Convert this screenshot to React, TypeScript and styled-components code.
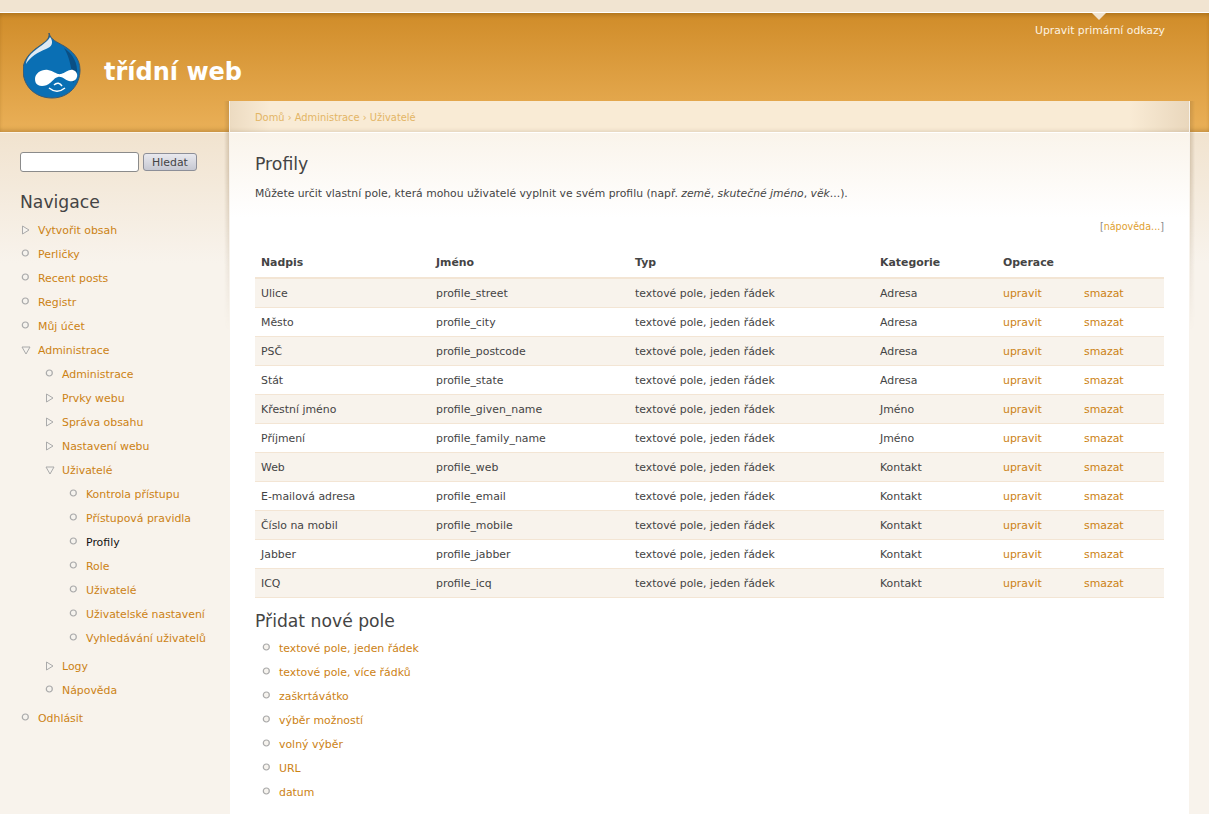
import React from "react";
import styled, { createGlobalStyle } from "styled-components";

const Global = createGlobalStyle`
  html, body { margin: 0; padding: 0; }
  body {
    font-family: "DejaVu Sans", sans-serif;
    font-size: 10.9px;
    color: #444;
    background: #f8f3ec;
    height: 814px;
    overflow: hidden;
  }
  a { color: #cc8214; text-decoration: none; }
`;

const Page = styled.div`
  width: 1209px;
  height: 814px;
  overflow: hidden;
`;
const TopStrip = styled.div`
  height: 12px;
  background: #f1e4d1;
  border-bottom: 1px solid #fff;
`;
const Header = styled.header`
  position: relative;
  height: 119px;
  border-bottom: 1px solid #fbf4e8;
  background: linear-gradient(180deg, #d08c29 0%, #eab058 100%);
  box-shadow: inset 0 4px 4px -2px rgba(110, 70, 10, 0.35), inset 0 -4px 4px -2px rgba(110, 70, 10, 0.3);
  display: flex;
  justify-content: space-between;
  align-items: flex-start;
  padding-left: 23px;
  padding-right: 44px;
`;
const Brand = styled.div`
  display: flex;
  align-items: flex-start;
  gap: 23px;
  margin-top: 20px;
`;
const SiteName = styled.h1`
  margin: 23px 0 0;
  font-size: 24px;
  font-weight: 700;
  line-height: 32px;
  color: #fff;
`;
const PrimaryLink = styled.a`
  margin-top: 10px;
  color: #fdf3e2;
  font-size: 10.8px;
  line-height: 16px;
`;
const Notch = styled.span`
  position: absolute;
  top: 0;
  right: 103px;
  width: 0;
  height: 0;
  border-left: 7px solid transparent;
  border-right: 7px solid transparent;
  border-top: 7px solid #f1e4d1;
`;
const Layout = styled.div`
  display: grid;
  grid-template-columns: 229px 961px;
  background: linear-gradient(180deg, #f1e3cf 0, #f8f3ec 130px);
  height: 681px;
  isolation: isolate;
`;
const Sidebar = styled.aside`
  padding: 19px 0 0 20px;
`;
const SearchForm = styled.form`
  display: flex;
  align-items: center;
  gap: 4px;
`;
const SearchInput = styled.input`
  box-sizing: border-box;
  width: 119px;
  height: 20px;
  padding: 0 3px;
  background: #fff;
  border: 1px solid #8b8b8b;
  border-radius: 3px;
`;
const SearchButton = styled.button`
  box-sizing: border-box;
  width: 54px;
  height: 18px;
  padding: 0;
  font: 10.9px "DejaVu Sans", sans-serif;
  color: #444;
  background: linear-gradient(180deg, #e9e9ee, #c6c8d2);
  border: 1px solid #8d8f98;
  border-radius: 3px;
`;
const BlockTitle = styled.h2`
  margin: 19px 0 6px;
  font-size: 17.2px;
  font-weight: 400;
  line-height: 22px;
  color: #444;
`;
const Menu = styled.ul`
  list-style: none;
  margin: 0;
  padding: 0;
`;
const SubMenu = styled(Menu)`
  padding-left: 6px;
  margin-bottom: 4px;
`;
const Item = styled.li`
  position: relative;
  padding-left: 18px;
  line-height: 24px;
`;
const Marker = styled.svg`
  position: absolute;
  left: 0;
  top: 6px;
  width: 11px;
  height: 11px;
`;
const ActiveLink = styled.a`
  color: #111;
`;
const Main = styled.main`
  position: relative;
  margin-top: -32px;
  min-height: 760px;
  background: #fff;
  border-left: 1px solid #f8f3ec;
  border-right: 1px solid #f8f3ec;
  &::before {
    content: "";
    position: absolute;
    z-index: -1;
    top: 0;
    left: -6px;
    right: -6px;
    height: 230px;
    background: linear-gradient(90deg, transparent, rgba(120, 90, 50, 0.28) 6px, rgba(120, 90, 50, 0.28) calc(100% - 6px), transparent);
    mask-image: linear-gradient(180deg, #000 30%, transparent 100%);
  }
`;
const Breadcrumb = styled.div`
  height: 31px;
  padding-left: 25px;
  line-height: 33px;
  font-size: 9.9px;
  color: #e3b565;
  border-bottom: 1px solid #fff;
  background:
    linear-gradient(90deg, rgba(170, 135, 90, 0.16), transparent 40px, transparent calc(100% - 60px), rgba(170, 135, 90, 0.2)),
    #f9ebd5;
  box-shadow: inset 0 -4px 4px -3px rgba(120, 100, 70, 0.2);
  a { color: #e3b565; }
`;
const Content = styled.div`
  padding: 17px 25px 0;
  background: linear-gradient(180deg, #faf4eb 0, #fff 85px);
`;
const Title = styled.h2`
  margin: 0;
  font-size: 17.3px;
  font-weight: 400;
  line-height: 28px;
  color: #444;
`;
const Intro = styled.p`
  margin: 7px 0 0;
  font-size: 10.8px;
  line-height: 17px;
`;
const HelpLine = styled.div`
  margin-top: 18px;
  text-align: right;
  font-size: 9.6px;
  line-height: 14px;
  color: #888;
  a { color: #e0a030; }
`;
const Table = styled.table`
  width: 909px;
  margin-top: 12px;
  border-collapse: collapse;
  table-layout: fixed;
  font-size: 10.9px;
`;
const Th = styled.th`
  height: 29px;
  padding: 2px 6px 0;
  text-align: left;
  font-weight: 700;
  border-bottom: 2px solid #f3e5d4;
`;
const Row = styled.tr<{ $odd: boolean }>`
  height: 29px;
  background: ${(p) => (p.$odd ? "#f8f3ec" : "#fff")};
  border-bottom: 1px solid #f3e5d4;
`;
const Td = styled.td`
  padding: 1px 6px 0;
`;
const Subhead = styled.h2`
  margin: 10px 0 3px;
  font-size: 17.2px;
  font-weight: 400;
  line-height: 26px;
  color: #444;
`;
const AddList = styled(Menu)`
  padding-left: 6px;
`;

const Druplicon = () => (
  <svg width="58" height="66" viewBox="0 0 58 66" aria-hidden="true">
    <path d="M26 0 C27 6 22 9 15 14 C6 20 0 28 0 37 C0 53 12 65 29 65 C46 65 57 52 57 37 C57 25 49 18 41 13 C34 9 28 7 26 0 Z" fill="#0a6fb4" stroke="#3e5a70" strokeWidth="1" />
    <path d="M27 4 C25 9 14 15 8 21 C5 24 3 28 3 31 C7 24 15 19 23 16 C29 14 31 9 27 4 Z" fill="#dfeaf3" />
    <path d="M41 15 C50 21 55 30 54 41 C53 45 52 47 50 50 C49 37 47 25 41 15 Z" fill="#0a4f85" />
    <path d="M12 46 C12 40 19 36 25 37 C31 38 34 42 38 41 C42 40 46 36 50 37 C53 38 55 41 54 44 C53 48 49 49 46 48 C42 47 39 43 35 44 C31 45 30 48 27 50 C24 53 18 54 15 52 C13 51 12 49 12 46 Z" fill="#fff" />
    <path d="M26 55 C31 59 37 59 42 55 M31 52 C34 49 37 50 39 53" fill="none" stroke="#fff" strokeWidth="1.5" />
  </svg>
);

type Kind = "leaf" | "closed" | "open";
const Mark = ({ kind }: { kind: Kind }) => (
  <Marker viewBox="0 0 11 11" aria-hidden="true">
    {kind === "leaf" && <circle cx="5.3" cy="4" r="3" fill="#f6f3ee" stroke="#aaa" strokeWidth="1.2" />}
    {kind === "closed" && <path d="M2.5 1 L9 5 L2.5 9 Z" fill="#f6f3ee" stroke="#aaa" />}
    {kind === "open" && <path d="M2 2 L10 2 L6 9 Z" fill="#f6f3ee" stroke="#aaa" />}
  </Marker>
);

const rows = [
  ["Ulice", "profile_street", "Adresa"],
  ["Město", "profile_city", "Adresa"],
  ["PSČ", "profile_postcode", "Adresa"],
  ["Stát", "profile_state", "Adresa"],
  ["Křestní jméno", "profile_given_name", "Jméno"],
  ["Příjmení", "profile_family_name", "Jméno"],
  ["Web", "profile_web", "Kontakt"],
  ["E-mailová adresa", "profile_email", "Kontakt"],
  ["Číslo na mobil", "profile_mobile", "Kontakt"],
  ["Jabber", "profile_jabber", "Kontakt"],
  ["ICQ", "profile_icq", "Kontakt"],
];
const widths = [175, 199, 245, 123, 81, 86];
const heads = ["Nadpis", "Jméno", "Typ", "Kategorie", "Operace", ""];
const addLinks = ["textové pole, jeden řádek", "textové pole, více řádků", "zaškrtávátko", "výběr možností", "volný výběr", "URL", "datum"];
const userLinks = ["Kontrola přístupu", "Přístupová pravidla", "Profily", "Role", "Uživatelé", "Uživatelské nastavení", "Vyhledávání uživatelů"];

export default function App() {
  return (
    <Page>
      <Global />
      <TopStrip />
      <Header>
        <Notch />
        <Brand>
          <Druplicon />
          <SiteName>třídní web</SiteName>
        </Brand>
        <PrimaryLink href="#">Upravit primární odkazy</PrimaryLink>
      </Header>
      <Layout>
        <Sidebar>
          <SearchForm onSubmit={(e) => e.preventDefault()}>
            <SearchInput aria-label="Hledat" />
            <SearchButton>Hledat</SearchButton>
          </SearchForm>
          <BlockTitle>Navigace</BlockTitle>
          <Menu>
            <Item><Mark kind="closed" /><a href="#">Vytvořit obsah</a></Item>
            <Item><Mark kind="leaf" /><a href="#">Perličky</a></Item>
            <Item><Mark kind="leaf" /><a href="#">Recent posts</a></Item>
            <Item><Mark kind="leaf" /><a href="#">Registr</a></Item>
            <Item><Mark kind="leaf" /><a href="#">Můj účet</a></Item>
            <Item>
              <Mark kind="open" /><a href="#">Administrace</a>
              <SubMenu>
                <Item><Mark kind="leaf" /><a href="#">Administrace</a></Item>
                <Item><Mark kind="closed" /><a href="#">Prvky webu</a></Item>
                <Item><Mark kind="closed" /><a href="#">Správa obsahu</a></Item>
                <Item><Mark kind="closed" /><a href="#">Nastavení webu</a></Item>
                <Item>
                  <Mark kind="open" /><a href="#">Uživatelé</a>
                  <SubMenu>
                    {userLinks.map((l) => (
                      <Item key={l}>
                        <Mark kind="leaf" />
                        {l === "Profily" ? <ActiveLink href="#">{l}</ActiveLink> : <a href="#">{l}</a>}
                      </Item>
                    ))}
                  </SubMenu>
                </Item>
                <Item><Mark kind="closed" /><a href="#">Logy</a></Item>
                <Item><Mark kind="leaf" /><a href="#">Nápověda</a></Item>
              </SubMenu>
            </Item>
            <Item><Mark kind="leaf" /><a href="#">Odhlásit</a></Item>
          </Menu>
        </Sidebar>
        <Main>
          <Breadcrumb>
            <a href="#">Domů</a> › <a href="#">Administrace</a> › <a href="#">Uživatelé</a>
          </Breadcrumb>
          <Content>
            <Title>Profily</Title>
            <Intro>
              Můžete určit vlastní pole, která mohou uživatelé vyplnit ve svém profilu (např. <em>země</em>, <em>skutečné jméno</em>, <em>věk</em>...).
            </Intro>
            <HelpLine>[<a href="#">nápověda...</a>]</HelpLine>
            <Table>
              <colgroup>
                {widths.map((w, i) => <col key={i} width={w} />)}
              </colgroup>
              <thead>
                <tr>{heads.map((h, i) => <Th key={i}>{h}</Th>)}</tr>
              </thead>
              <tbody>
                {rows.map((r, i) => (
                  <Row key={r[1]} $odd={i % 2 === 0}>
                    <Td>{r[0]}</Td>
                    <Td>{r[1]}</Td>
                    <Td>textové pole, jeden řádek</Td>
                    <Td>{r[2]}</Td>
                    <Td><a href="#">upravit</a></Td>
                    <Td><a href="#">smazat</a></Td>
                  </Row>
                ))}
              </tbody>
            </Table>
            <Subhead>Přidat nové pole</Subhead>
            <AddList>
              {addLinks.map((l) => (
                <Item key={l}><Mark kind="leaf" /><a href="#">{l}</a></Item>
              ))}
            </AddList>
          </Content>
        </Main>
      </Layout>
    </Page>
  );
}
